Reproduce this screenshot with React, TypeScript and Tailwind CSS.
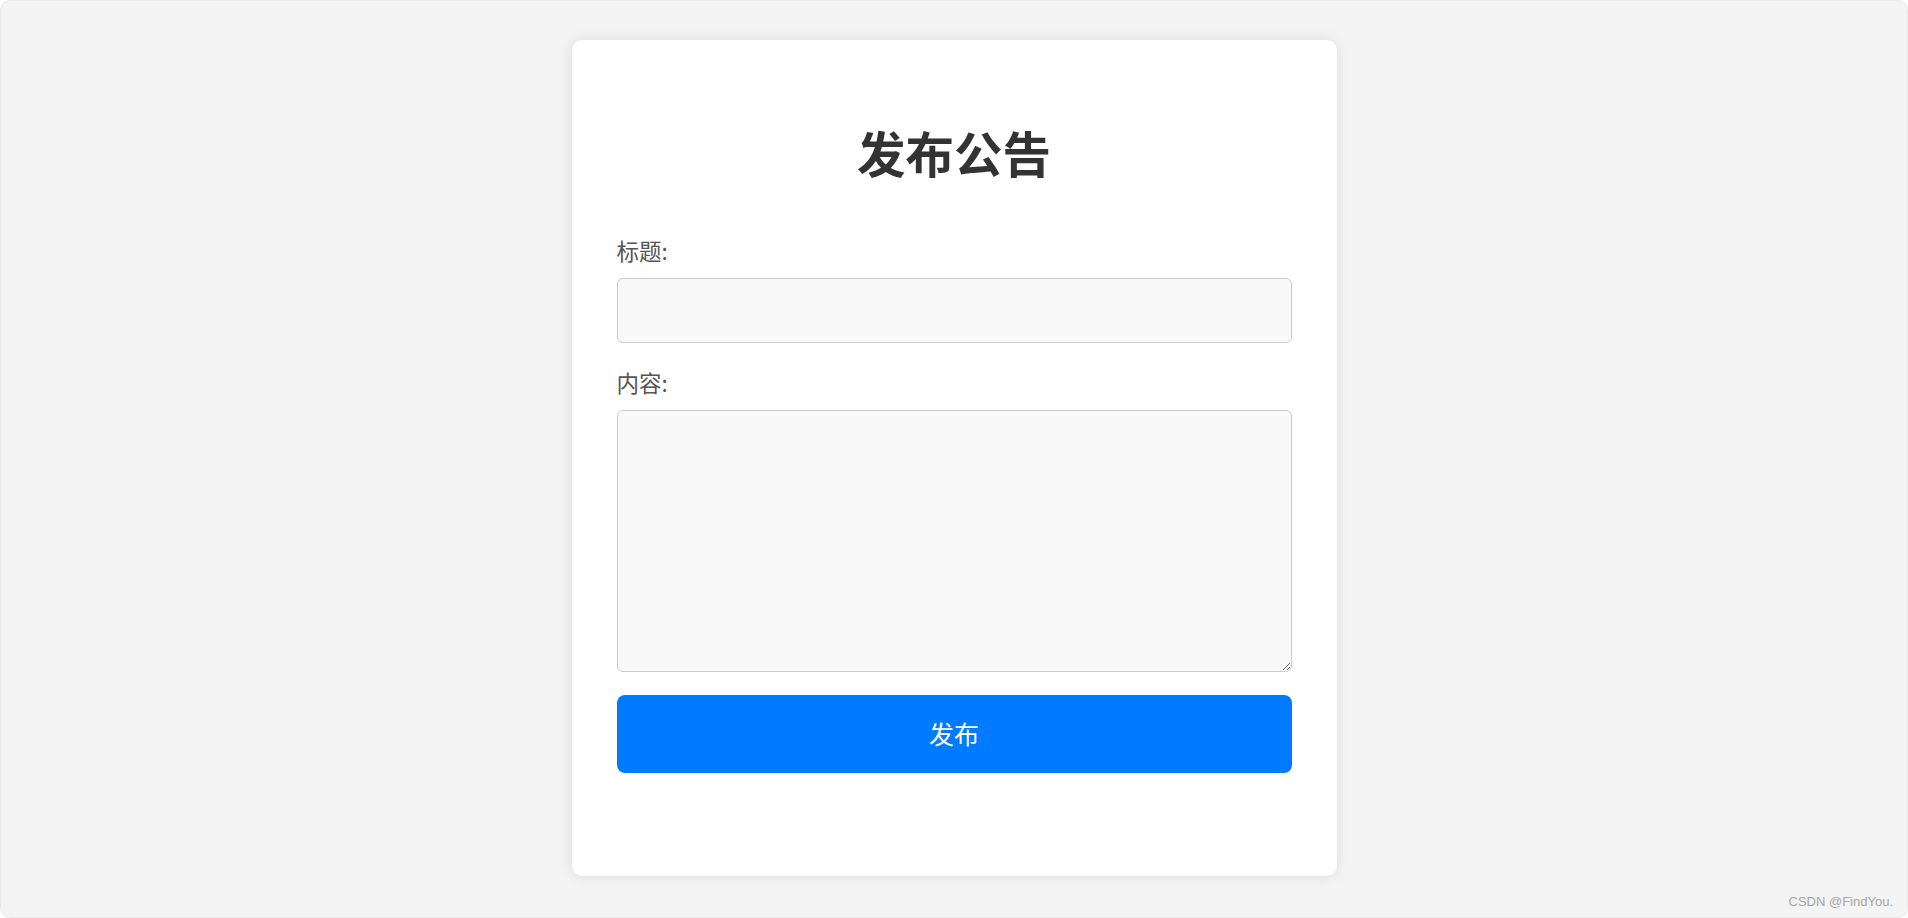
const font = "font-['Microsoft_YaHei','Noto_Sans_CJK_SC','Liberation_Sans',sans-serif]";

export default function App() {
  return (
    <div className={`h-[918px] w-full bg-white ${font}`}>
      <div className="relative h-full w-full rounded-[10px] border border-[#e8e8e8] bg-[#f4f4f4] pt-[39px]">
        {/* Card */}
        <div className="mx-auto w-[765px] rounded-[10px] bg-white px-[45px] pt-[82px] pb-[103px] shadow-[0_0_14px_rgba(0,0,0,0.1)]">
          <h2 className="text-center text-[48.5px] leading-[60px] font-bold text-[#333]">
            发布公告
          </h2>

          <form className="mt-[53px] flex flex-col" onSubmit={(e) => e.preventDefault()}>
            <label className="text-[22.5px] leading-[30px] text-[#555]">标题:</label>
            <input
              type="text"
              className="mt-[13px] h-[65px] w-full rounded-[6px] border border-[#ccc] bg-[#f9f9f9] px-3 text-[20px] outline-none"
            />

            <label className="mt-[24px] text-[22.5px] leading-[30px] text-[#555]">内容:</label>
            <textarea className="mt-[13px] h-[262px] w-full rounded-[6px] border border-[#ccc] bg-[#f9f9f9] px-3 py-2 text-[20px] outline-none" />

            <button
              type="submit"
              className="mt-[23px] h-[78px] w-full rounded-[8px] bg-[#007bff] text-[25px] text-white"
            >
              发布
            </button>
          </form>
        </div>

        {/* Watermark */}
        <span className="absolute right-[14px] bottom-[6px] font-['Liberation_Sans',sans-serif] text-[13px] text-[#a6a6a6]">
          CSDN @FindYou.
        </span>
      </div>
    </div>
  );
}
